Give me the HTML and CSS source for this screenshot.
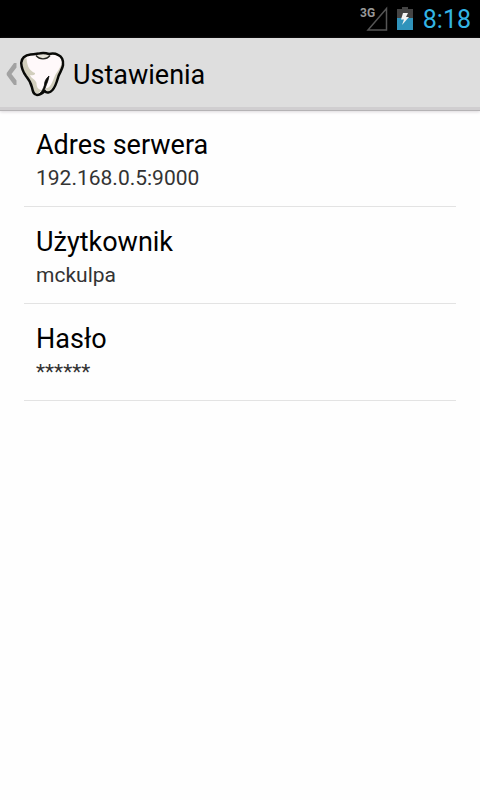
FILE: index.html
```html
<!DOCTYPE html>
<html lang="pl">
<head>
<meta charset="utf-8">
<meta name="viewport" content="width=device-width, initial-scale=1">
<title>Ustawienia</title>
<link rel="stylesheet" href="styles.css">
</head>
<body>
<div class="status-bar">
  <svg class="signal" width="28" height="26" viewBox="0 0 28 26" aria-hidden="true">
    <path d="M8 24H26.500V2.500Z" fill="none" stroke="#555" stroke-width="1.500"/>
    <text class="network" x="0" y="11">3G</text>
  </svg>
  <svg class="battery" width="16" height="24" viewBox="0 0 16 24" aria-hidden="true">
    <path d="M5 0H11V2H16V11H0V2H5Z" fill="#444"/>
    <path d="M0 11H16V23H0Z" fill="#3093bb"/>
    <path d="M6 6H11L9 10H12L5 18L7 12.500H4Z" fill="#f4f4f4"/>
  </svg>
  <time class="clock">8:18</time>
</div>
<header class="action-bar">
  <a class="home" href="#">
    <svg class="back" width="12" height="24" viewBox="0 0 12 24" aria-hidden="true">
      <path d="M10.500 1V5.500L5.500 12L10.500 18.500V23H8L0.700 13V11L8 1Z" fill="#a2a2a2"/>
    </svg>
    <svg class="tooth" width="50" height="50" viewBox="0 1 50 50" aria-hidden="true">
      <g transform="translate(0 1)">
        <path d="M12.500 5.500C16 5.500 18 5 20.500 4.600C24 3.800 28 4 31 5C34 4.300 37 4.300 40 5.800C44 7.500 45.500 11 45 16C44.500 20 42 23 40.500 27C39 32 38 37 34.500 41C32 43.800 28.500 44.500 26.800 42C24.500 44 22 46 19 46C15.500 46 14.800 42.500 14 38.500C13 33.500 10.500 30 8 27C5 23 3.500 19 3.200 14C3.200 9.500 7 6 12.500 5.500Z" fill="#fff9fa"/>
        <path d="M4.300 13C3.800 19 7 24 11 29C14.500 33 15 40 17 43C18.500 45.500 22 43.500 24 41C19.500 41 18.500 37 18.500 34C17.500 30 13.500 30 12 26C16 27 17.500 25.500 17 24C12 22 9 18 8.500 9C5.500 10 4.500 11 4.300 13Z" fill="#d2cfbd"/>
        <path d="M44 13C44 19 40 23 39 29C37 35 34 41 30.500 42C28.500 42.500 28 41 28 39C32 39.500 34 34 36 29C38 23 42.500 20 44 13Z" fill="#d2cfbd"/>
        <path d="M18.500 6C22 4.500 29 4.500 31.500 6C30 9 28 9.500 25 9.500C21 9.500 19.500 8.500 18.500 6Z" fill="#e6e3d8"/>
        <path d="M12.500 5.500C16 5.500 18 5 20.500 4.600C24 3.800 28 4 31 5C34 4.300 37 4.300 40 5.800C44 7.500 45.500 11 45 16C44.500 20 42 23 40.500 27C39 32 38 37 34.500 41C32 43.800 28.500 44.500 26.800 42C24.500 44 22 46 19 46C15.500 46 14.800 42.500 14 38.500C13 33.500 10.500 30 8 27C5 23 3.500 19 3.200 14C3.200 9.500 7 6 12.500 5.500Z" fill="none" stroke="#090a07" stroke-width="2.500" stroke-linejoin="round"/>
        <path d="M26.500 42.500C26.500 38 30 34 31 27C27.500 30 26.500 33 26.500 36C25.500 39.500 24 42 22.500 44Z" fill="#080906" stroke="#080906" stroke-width="0.800"/>
        <path d="M18 6.500C20 9 22 9.800 25 9.800C29 9.800 30.500 8.500 32 6.500" fill="none" stroke="#24251f" stroke-width="1.300"/>
      </g>
    </svg>
    <h1 class="title">Ustawienia</h1>
  </a>
</header>
<main class="settings">
  <button class="row" type="button">
    <span class="label">Adres serwera</span>
    <span class="value">192.168.0.5:9000</span>
  </button>
  <button class="row" type="button">
    <span class="label">Użytkownik</span>
    <span class="value">mckulpa</span>
  </button>
  <button class="row" type="button">
    <span class="label">Hasło</span>
    <span class="value">******</span>
  </button>
</main>
</body>
</html>
```
FILE: styles.css
```css
* {
  box-sizing: border-box;
}

body {
  margin: 0;
  background: #fefefe;
  color: #000;
  font-family: Roboto, "Noto Sans", sans-serif;
}

.status-bar {
  display: flex;
  align-items: center;
  justify-content: flex-end;
  height: 38px;
  padding-right: 9px;
  background: #000;
}

.signal {
  margin-right: 9px;
}

.network {
  fill: #999;
  font-size: 12px;
  font-weight: 700;
}

.battery {
  margin-right: 10px;
}

.clock {
  padding-top: 2px;
  color: #33b5e5;
  font-size: 25px;
  line-height: 36px;
}

.action-bar {
  height: 72px;
  background: #dedede;
  box-shadow: inset 0 -3px #d0ced0, 0 1px #b5b3b5, 0 2px 3px #dcd8dc;
}

.home {
  display: flex;
  align-items: center;
  height: 72px;
  padding-left: 6px;
  color: inherit;
  text-decoration: none;
}

.title {
  margin: 0 0 0 5px;
  padding-top: 2px;
  font-size: 27px;
  font-weight: 400;
  line-height: 36px;
}

.settings {
  padding: 0 24px;
}

.row {
  display: block;
  width: 100%;
  height: 97px;
  padding: 17px 12px 15px;
  border: 0;
  border-bottom: 1px solid #e3e3e3;
  background: none;
  color: inherit;
  font: inherit;
  text-align: left;
}

.label,
.value {
  display: block;
}

.label {
  font-size: 27px;
  line-height: 36px;
}

.value {
  padding-top: 1px;
  color: #333;
  font-size: 21px;
  line-height: 28px;
}
```
